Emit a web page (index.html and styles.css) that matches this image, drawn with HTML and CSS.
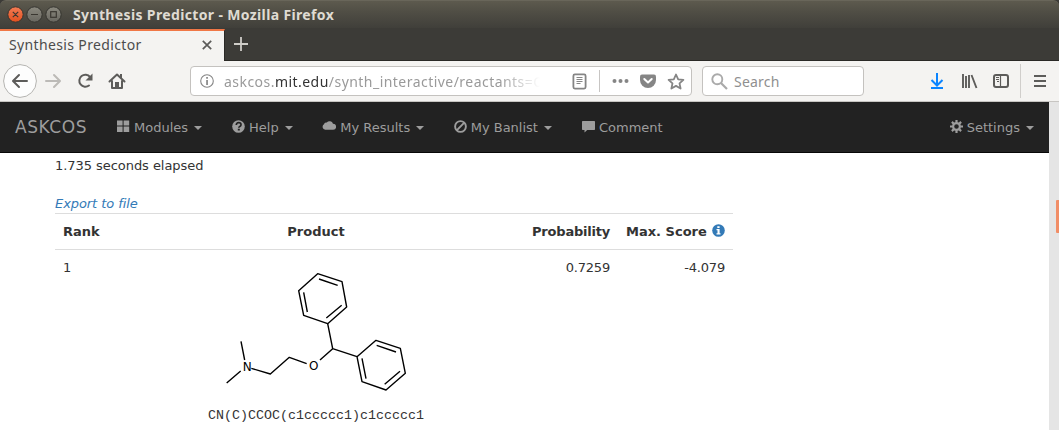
FILE: index.html
```html
<!DOCTYPE html>
<html lang="en">
<head>
<meta charset="utf-8">
<title>Synthesis Predictor</title>
<link rel="stylesheet" href="styles.css">
</head>
<body>
<div class="window">
  <header class="titlebar">
    <svg class="controls" width="62" height="28" viewBox="0 0 62 28">
      <defs>
        <linearGradient id="close" x1="0" y1="0" x2="0" y2="1"><stop offset="0" stop-color="#f37c55"/><stop offset="1" stop-color="#e2501e"/></linearGradient>
        <linearGradient id="grey" x1="0" y1="0" x2="0" y2="1"><stop offset="0" stop-color="#8b897f"/><stop offset="1" stop-color="#68665f"/></linearGradient>
      </defs>
      <g stroke="#35342f"><circle cx="15.5" cy="14.5" r="7.7" fill="url(#close)"/><circle cx="34.5" cy="14.5" r="7.7" fill="url(#grey)"/><circle cx="53.5" cy="14.5" r="7.7" fill="url(#grey)"/></g>
      <g stroke="#3a3731" stroke-width="1.2" fill="none"><path d="M12.8 11.8l5.4 5.4M18.2 11.8l-5.4 5.4M31 14.5h7"/><rect x="50.7" y="11.7" width="5.6" height="5.6"/></g>
    </svg>
    <span class="window-title">Synthesis Predictor - Mozilla Firefox</span>
  </header>
  <div class="tabs">
    <div class="tab"><span class="tab-title">Synthesis Predictor</span>
      <svg width="10" height="10" viewBox="0 0 10 10"><path d="M.8.8l8.4 8.4M9.2.8L.8 9.2" stroke="#5c5b59" stroke-width="1.7"/></svg>
    </div>
    <svg class="new-tab" width="14" height="14" viewBox="0 0 14 14"><path d="M7 0v14M0 7h14" stroke="#cfcdc8" stroke-width="1.8"/></svg>
  </div>
  <div class="toolbar">
    <svg class="nav-icons" width="130" height="40" viewBox="0 0 130 40">
      <circle cx="20" cy="20" r="16.4" fill="#fdfdfd" stroke="#b5b4b1"/>
      <g fill="none" stroke="#5d5c5a" stroke-width="2" stroke-linecap="round" stroke-linejoin="round">
        <path d="M27 20H13.5M19 14l-6 6 6 6"/>
        <path stroke="#bcbab7" d="M46 20h13.500M54 14l6 6-6 6"/>
        <path d="M90 16A6 6 0 1 0 89 24.500"/>
        <path d="M109.500 20.500l7.500-7 7.500 7M112 20v7h10v-7"/>
      </g>
      <path d="M85.500 19.500h7v-7z" fill="#5d5c5a"/>
      <path d="M115 27v-6h4v6z" fill="#5d5c5a"/><path d="M120 13h2v4h-2z" fill="#5d5c5a"/>
    </svg>
    <div class="address">
      <svg class="site-info" width="14" height="14" viewBox="0 0 14 14"><circle cx="7" cy="7" r="6.300" fill="none" stroke="#858585" stroke-width="1.100"/><path d="M6.200 3.100h1.700v1.600H6.200zM6.200 6h1.700v5H6.200z" fill="#858585"/></svg>
      <span class="url">askcos.<b>mit.edu</b>/synth_interactive/reactants=C</span>
      <svg class="page-actions" width="120" height="28" viewBox="0 0 120 28">
        <g fill="none" stroke="#858585" stroke-width="1.800"><rect x="6.400" y="7.400" width="12.200" height="14.200" rx="1.500"/><path d="M9.500 10.500h6M9.500 12.500h6M9.500 14.500h6M9.500 16.500h4" stroke-width="1"/></g>
        <path d="M32.500 3v22" stroke="#c7c5c3"/>
        <g fill="#858585"><circle cx="47.500" cy="14" r="2"/><circle cx="53.500" cy="14" r="2"/><circle cx="59.500" cy="14" r="2"/>
        <path d="M75 7.500h12q2 0 2 2V13a8 8 0 0 1-16 0V9.500q0-2 2-2z"/></g>
        <path d="M77.300 12l3.700 3.500 3.700-3.500" fill="none" stroke="#fff" stroke-width="2" stroke-linecap="round" stroke-linejoin="round"/>
        <path d="M109 7.500l2.200 4.800 5.200.6-3.900 3.500 1.100 5.100-4.600-2.600-4.600 2.600 1.100-5.100-3.900-3.500 5.200-.6z" fill="none" stroke="#858585" stroke-width="1.800" stroke-linejoin="round"/>
      </svg>
    </div>
    <div class="search">
      <svg width="17" height="17" viewBox="0 0 17 17"><circle cx="6.300" cy="6.300" r="5" fill="none" stroke="#aaa" stroke-width="1.900"/><path d="M10 10l6 6" stroke="#aaa" stroke-width="2.200"/></svg>
      <span>Search</span>
    </div>
    <svg class="tools" width="139" height="40" viewBox="920 61 139 40">
      <path d="M937 73v12M931.500 80l5.500 5.500 5.500-5.500M931 88h12" fill="none" stroke="#0a84ff" stroke-width="2"/>
      <path d="M963 74v14M966 76v12M969 75v13M971.500 75l5 13" fill="none" stroke="#5d5c5a" stroke-width="1.900"/>
      <rect x="994" y="75" width="14" height="12" rx="2" fill="none" stroke="#5d5c5a" stroke-width="2"/>
      <path d="M1000.500 75v12" stroke="#5d5c5a" stroke-width="1.200"/><path d="M996 77.500h3M996 79.500h3M997 81.500h2" stroke="#5d5c5a"/>
      <path d="M1020.500 64v34" stroke="#d0cecb"/>
      <path d="M1034 76h12M1034 81h12M1034 86h12" stroke="#5d5c5a" stroke-width="2"/>
    </svg>
  </div>
  <div class="viewport">
    <main class="page">
      <nav class="navbar">
        <span class="brand">ASKCOS</span>
        <span class="item modules"><svg width="13" height="13" viewBox="0 0 13 13"><path d="M0 .5h5.600v5H0zM6.600.5h5.600v5H6.600zM0 6.500h5.600v5.500H0zM6.600 6.500h5.600v5.500H6.600z"/></svg><span>Modules</span><i class="caret"></i></span>
        <span class="item help"><svg width="13" height="13" viewBox="0 0 13 13"><circle cx="6.500" cy="6.500" r="6.300"/><path d="M4.300 5q0-2.300 2.400-2.300T9 4.700Q9 5.800 7.800 6.400q-1 .5-1 1.300M5.800 9.600h2" fill="none" stroke="#222" stroke-width="1.700"/></svg><span>Help</span><i class="caret"></i></span>
        <span class="item results"><svg width="14" height="13" viewBox="0 0 14 13"><path d="M3.200 9.800A3 3 0 0 1 2 4.300 2.300 2.300 0 0 1 4.800 2.500 3.600 3.600 0 0 1 11 3.800a3 3 0 0 1 .2 6z"/></svg><span>My Results</span><i class="caret"></i></span>
        <span class="item banlist"><svg width="13" height="13" viewBox="0 0 13 13"><g fill="none" stroke="#9d9d9d" stroke-width="1.900"><circle cx="6.500" cy="6.500" r="5.400"/><path d="M2.700 10.300l7.600-7.600"/></g></svg><span>My Banlist</span><i class="caret"></i></span>
        <span class="item comment"><svg width="13" height="13" viewBox="0 0 13 13"><path d="M.7 1h11.600q.7 0 .7.700v7.600q0 .7-.7.700H5.200L2.500 12.500V10H.7Q0 10 0 9.300V1.700Q0 1 .7 1z"/></svg><span>Comment</span></span>
        <span class="item settings"><svg width="13" height="13" viewBox="0 0 13 13"><circle cx="6.500" cy="6.500" r="3.400" fill="none" stroke="#9d9d9d" stroke-width="2.200"/><path d="M6.500 0v2.500M6.500 10.500V13M0 6.500h2.500M10.500 6.500H13M1.900 1.900l1.800 1.800M9.300 9.300l1.800 1.800M11.100 1.900L9.300 3.700M3.700 9.300l-1.800 1.800" stroke="#9d9d9d" stroke-width="2.200"/></svg><span>Settings</span><i class="caret"></i></span>
      </nav>
      <section class="content">
        <p class="elapsed">1.735 seconds elapsed</p>
        <a class="export">Export to file</a>
        <table class="results-table">
          <thead><tr><th class="rank">Rank</th><th class="product">Product</th><th class="probability">Probability</th><th class="score">Max. Score <svg width="13" height="13" viewBox="0 0 13 13"><circle cx="6.500" cy="6.500" r="6.300" fill="#337ab7"/><path d="M5.300 2.200h2.300v1.700H5.300zM4.500 5h3.100v4.200h.9v1.300h-4V9.200h1V6.300h-1z" fill="#fff"/></svg></th></tr></thead>
          <tbody><tr><td class="rank">1</td><td class="product">
            <svg class="molecule" width="240" height="140" viewBox="0 9 720 420">
              <g fill="none" stroke="#000" stroke-width="4.200" stroke-linejoin="round">
                <path d="M383 56l73 24 14 76-57 50-72-25-15-74zM387 72l56 19M455 151l-46 38M352 171l-11-59"/>
                <path d="M413 206l15 75 73 24 57-49 73 24 15 75-58 50-72-25-15-75M560 271l58 20M630 349l-46 39M528 371l-12-61"/>
                <path d="M428 281l-38 34M350 326l-52-19-57 50-57-17M153 259l11 56M152 348l-42 36"/>
              </g>
              <text x="172" y="347" class="atom">N</text><text x="371" y="345" class="atom">O</text>
            </svg>
            <div class="smiles">CN(C)CCOC(c1ccccc1)c1ccccc1</div>
          </td><td class="probability">0.7259</td><td class="score">-4.079</td></tr></tbody>
        </table>
      </section>
    </main>
    <div class="scrollbar"><div class="thumb"></div></div>
  </div>
</div>
</body>
</html>
```
FILE: styles.css
```css
* { box-sizing: border-box; }
body { margin: 0; background: #fff; overflow: hidden; }
svg { display: block; flex: none; }
.window { width: 1059px; height: 430px; overflow: hidden; display: flex; flex-direction: column; font-family: "Noto Sans", sans-serif; background: #3c3b37; }
.titlebar { flex: none; height: 28px; display: flex; background: linear-gradient(#5d5a4e, #504e45 40%, #403f3a); border-top: 1px solid #69665a; border-radius: 6px 6px 0 0; }
.controls { margin-top: -1px; }
.window-title { margin-left: 11px; font-size: 14px; line-height: 27px; font-weight: 700; letter-spacing: .36px; color: #dfdbd2; white-space: nowrap; }
.tabs { flex: none; height: 33px; display: flex; background: #3c3b37; border-bottom: 1px solid #2a2926; }
.tab { width: 225px; height: 33px; margin-top: 1px; display: flex; align-items: center; border-top: 2px solid #f07746; border-right: 1px solid #2a2926; background: #f4f3f1; padding: 0 12px 3px 9px; justify-content: space-between; }
.tab-title { font-size: 14px; line-height: 20px; letter-spacing: .36px; color: #4c4c4c; white-space: nowrap; }
.new-tab { margin: 9px 0 0 9px; }
.toolbar { flex: none; height: 41px; display: flex; background: #f4f3f1; border-bottom: 1px solid #c7c5c2; }
.address { width: 502px; height: 30px; margin: 5px 0 0 60px; display: flex; border: 1px solid #c4c2bf; border-radius: 4px; background: #fff; }
.site-info { margin: 7px 0 0 9px; }
.url { width: 316px; margin-left: 10px; font-size: 14px; line-height: 29px; letter-spacing: .46px; color: #9a9a9a; white-space: nowrap; overflow: hidden; -webkit-mask-image: linear-gradient(90deg, #000 275px, transparent 316px); mask-image: linear-gradient(90deg, #000 275px, transparent 316px); }
.url b { font-weight: 400; color: #333; }
.page-actions { margin-left: 27px; }
.search { width: 162px; height: 30px; margin: 5px 0 0 10px; display: flex; border: 1px solid #c4c2bf; border-radius: 4px; background: #fff; font-size: 14px; line-height: 29px; letter-spacing: .2px; color: #8f8f8f; }
.search svg { margin: 6px 6px 0 8px; }
.tools { margin-left: auto; }
.viewport { flex: 1; min-height: 0; display: flex; background: #fff; }
.page { width: 1049px; font-family: "DejaVu Sans", sans-serif; font-size: 13px; color: #333; }
.scrollbar { width: 10px; background: #e5e5e5; padding: 98px 0 0 7px; }
.thumb { height: 33px; background: #f18e67; border-radius: 1px 0 0 1px; }
.navbar { height: 51px; display: flex; background: #222; border-bottom: 1px solid #080808; color: #9d9d9d; line-height: 50px; padding: 0 15px; }
.brand { width: 102px; font-size: 17px; letter-spacing: .55px; line-height: 51px; }
.item { display: flex; align-items: center; white-space: nowrap; }
.item svg { margin: -1px 4px 0 0; fill: #9d9d9d; }
.item > span { height: 50px; line-height: 51px; }
.caret { margin: 1px 0 0 6px; border: 4px solid transparent; border-top-color: #9d9d9d; border-bottom: 0; }
.help, .comment { margin-left: 30px; }
.results, .banlist { margin-left: 29.5px; }
.settings { margin-left: auto; }
.content { padding: 3px 55px; }
.elapsed { margin: 0 0 19px; line-height: 19px; letter-spacing: -.05px; }
.export { display: block; line-height: 19px; letter-spacing: -.07px; font-style: italic; color: #337ab7; }
.results-table { width: 678px; table-layout: fixed; border-collapse: separate; border-spacing: 0; }
.results-table th, .results-table td { border-top: 1px solid #ddd; padding: 8px; line-height: 19px; vertical-align: top; text-align: right; white-space: nowrap; }
.results-table th { height: 36px; }
.results-table .rank { width: 53px; text-align: left; }
.results-table .product { width: 416px; text-align: center; }
.results-table .probability { width: 94px; }
.results-table th.probability { letter-spacing: -.2px; }
.results-table td.probability, .results-table td.score { letter-spacing: -.2px; }
.results-table .score { width: 115px; }
.score svg { display: inline-block; vertical-align: -1px; margin-left: 1px; }
.molecule { margin-left: 74px; }
.atom { font: 36px "DejaVu Sans", sans-serif; text-anchor: middle; fill: #000; }
.smiles { margin-top: 8px; font: 13.33px/19px "Liberation Mono", monospace; }
```
